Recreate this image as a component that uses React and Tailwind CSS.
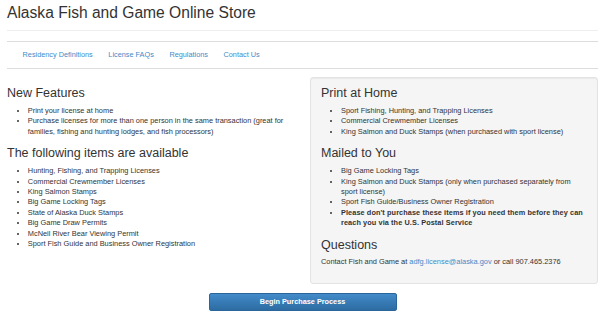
export default function App() {
  const items = [
    'Hunting, Fishing, and Trapping Licenses',
    'Commercial Crewmember Licenses',
    'King Salmon Stamps',
    'Big Game Locking Tags',
    'State of Alaska Duck Stamps',
    'Big Game Draw Permits',
    'McNeil River Bear Viewing Permit',
    'Sport Fish Guide and Business Owner Registration',
  ];

  return (
    <div className="w-[600px] h-[313px] overflow-hidden bg-white text-[#333] font-['Liberation_Sans',Arial,sans-serif] text-[7.4px] leading-[10.4px]">
      <div className="pl-[7px] pr-[2px]">
        <div className="pt-[4px] pb-[9px] border-b border-[#eee]">
          <h1 className="text-[15.6px] leading-[17px] font-normal">Alaska Fish and Game Online Store</h1>
        </div>

        <nav className="mt-[10px] h-[28px] border-y border-[#ddd] flex items-center pl-[7.8px]">
          {['Residency Definitions', 'License FAQs', 'Regulations', 'Contact Us'].map((l) => (
            <a key={l} className="px-[7.8px] text-[#428bca] text-[7.3px]">{l}</a>
          ))}
        </nav>

        <div className="mt-[8px] grid grid-cols-[1fr_288px] gap-[14px] items-start">
          <div className="pt-[10px]">
            <h3 className="text-[12.5px] leading-[13.75px] font-normal mb-[5.2px]">New Features</h3>
            <ul className="list-disc pl-[20.8px]">
              <li>Print your license at home</li>
              <li>Purchase licenses for more than one person in the same transaction (great for families, fishing and hunting lodges, and fish processors)</li>
            </ul>
            <h3 className="mt-[10px] text-[12.5px] leading-[13.75px] font-normal mb-[5.2px]">The following items are available</h3>
            <ul className="list-disc pl-[20.8px]">
              {items.map((i) => (
                <li key={i}>{i}</li>
              ))}
            </ul>
          </div>

          <div className="bg-[#f5f5f5] border border-[#e3e3e3] rounded-[3px] shadow-[inset_0_1px_1px_rgba(0,0,0,0.05)] pt-[9px] pb-[10px] pl-[10px] pr-[12px]">
            <h3 className="text-[12.5px] leading-[13.75px] font-normal mb-[5.2px]">Print at Home</h3>
            <ul className="list-disc pl-[20px]">
              <li>Sport Fishing, Hunting, and Trapping Licenses</li>
              <li>Commercial Crewmember Licenses</li>
              <li>King Salmon and Duck Stamps (when purchased with sport license)</li>
            </ul>
            <h3 className="mt-[10px] text-[12.5px] leading-[13.75px] font-normal mb-[5.2px]">Mailed to You</h3>
            <ul className="list-disc pl-[20px]">
              <li>Big Game Locking Tags</li>
              <li>King Salmon and Duck Stamps (only when purchased separately from sport license)</li>
              <li>Sport Fish Guide/Business Owner Registration</li>
              <li className="font-bold text-[7.3px] tracking-[0.1px]">
                <span className="whitespace-nowrap">Please don't purchase these items if you need them before they can</span>
                <br />
                reach you via the U.S. Postal Service
              </li>
            </ul>
            <h3 className="mt-[10px] text-[12.5px] leading-[13.75px] font-normal mb-[5.2px]">Questions</h3>
            <p className="mb-[5.2px]">
              Contact Fish and Game at <a className="text-[#428bca]">adfg.license@alaska.gov</a> or call 907.465.2376
            </p>
          </div>
        </div>

        <div className="mt-[9px] flex justify-center">
          <button className="w-[188px] h-[18px] rounded-[2px] border border-[#2b669a] bg-linear-to-b from-[#428bca] to-[#2d6ca2] text-white font-bold text-[7.3px] leading-none">
            Begin Purchase Process
          </button>
        </div>
      </div>
    </div>
  );
}
